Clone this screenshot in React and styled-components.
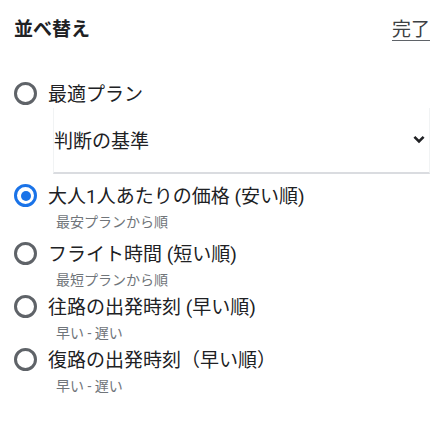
import styled, { createGlobalStyle } from "styled-components";

const GlobalStyle = createGlobalStyle`
  body {
    margin: 0;
    background: #fff;
    font-family: Roboto, "Noto Sans CJK JP", sans-serif;
    color: #202124;
  }
`;

const Sheet = styled.div`
  padding: 14px 13px 0 14px;
`;

const Header = styled.div`
  display: flex;
  justify-content: space-between;
  align-items: center;
  height: 26px;
`;

const Title = styled.h1`
  margin: 0;
  font-size: 19px;
  font-weight: 700;
  color: #202124;
`;

const DoneLink = styled.span`
  font-size: 19px;
  color: #3c4043;
  text-decoration: underline;
  text-underline-offset: 4px;
  text-decoration-color: #5f6368;
`;

const Options = styled.div`
  display: flex;
  flex-direction: column;
  margin-top: 42px;
`;

const Option = styled.label`
  display: grid;
  grid-template-columns: 23px 1fr;
  column-gap: 11px;
  margin-top: ${(p) => p.$gap || 0}px;
`;

const Radio = styled.span`
  box-sizing: border-box;
  width: 23px;
  height: 23px;
  border-radius: 50%;
  border: 3px solid ${(p) => (p.$checked ? "#1a73e8" : "#5f6368")};
  display: flex;
  align-items: center;
  justify-content: center;

  &::after {
    content: "";
    width: 10px;
    height: 10px;
    border-radius: 50%;
    background: #1a73e8;
    display: ${(p) => (p.$checked ? "block" : "none")};
  }
`;

const Label = styled.div`
  font-size: 19px;
  line-height: 26px;
  color: #202124;
`;

const Hint = styled.div`
  margin: 3px 0 0 8px;
  font-size: 14px;
  line-height: 18px;
  color: #70757a;
`;

const SelectBox = styled.div`
  grid-column: 2;
  margin-left: 5px;
  height: 66px;
  box-sizing: border-box;
  display: flex;
  align-items: center;
  justify-content: space-between;
  padding: 0 4px 2px 0;
  border-left: 1px solid #f1f3f4;
  border-right: 1px solid #f1f3f4;
  border-bottom: 2px solid #dadce0;
  font-size: 19px;
  color: #202124;
`;

const Chevron = () => (
  <svg width="12" height="9" viewBox="0 0 12 9">
    <path d="M1.4 1.8 6 6.4l4.6-4.6" fill="none" stroke="#202124" strokeWidth="2.6" />
  </svg>
);

const options = [
  { label: "大人1人あたりの価格 (安い順)", hint: "最安プランから順", checked: true, gap: 10 },
  { label: "フライト時間 (短い順)", hint: "最短プランから順", gap: 11 },
  { label: "往路の出発時刻 (早い順)", hint: "早い - 遅い", gap: 6 },
  { label: "復路の出発時刻（早い順）", hint: "早い - 遅い", gap: 6 },
];

export default function App() {
  return (
    <Sheet>
      <GlobalStyle />
      <Header>
        <Title>並べ替え</Title>
        <DoneLink>完了</DoneLink>
      </Header>
      <Options>
        <Option>
          <Radio />
          <Label>最適プラン</Label>
          <SelectBox>
            <span>判断の基準</span>
            <Chevron />
          </SelectBox>
        </Option>
        {options.map((o) => (
          <Option key={o.label} $gap={o.gap}>
            <Radio $checked={o.checked} />
            <div>
              <Label>{o.label}</Label>
              <Hint>{o.hint}</Hint>
            </div>
          </Option>
        ))}
      </Options>
    </Sheet>
  );
}
